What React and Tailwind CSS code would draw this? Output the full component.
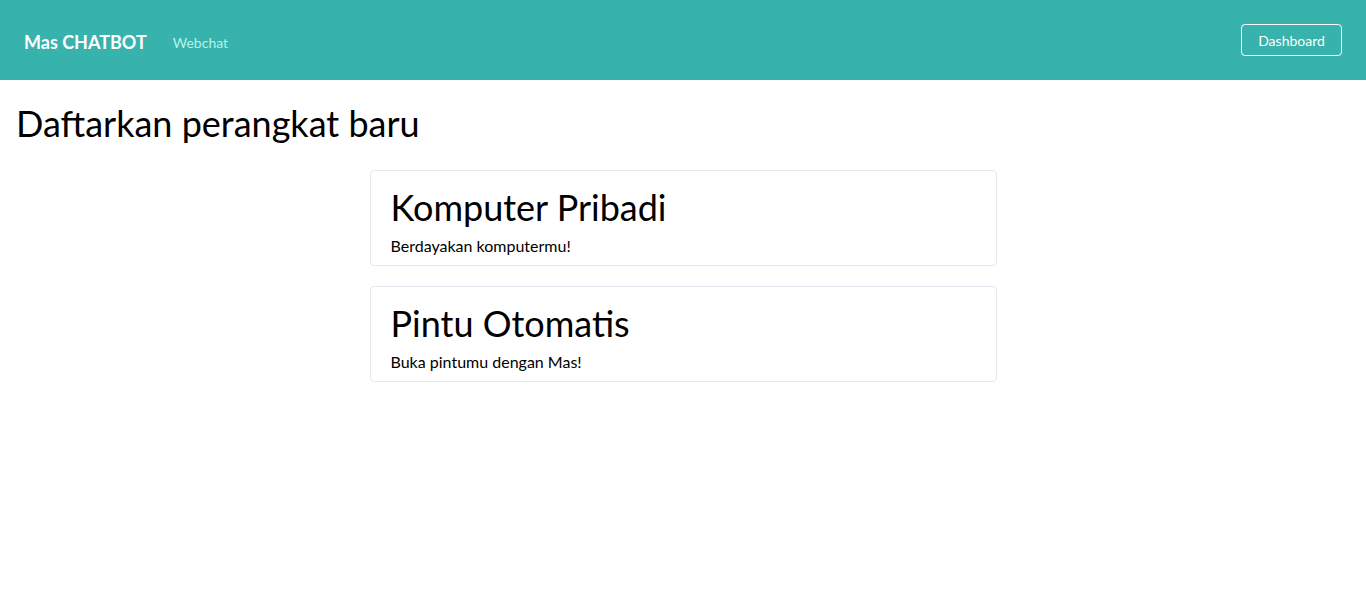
const font = { fontFamily: 'Lato, "Noto Sans", sans-serif' }

const devices = [
  { name: "Komputer Pribadi", desc: "Berdayakan komputermu!" },
  { name: "Pintu Otomatis", desc: "Buka pintumu dengan Mas!" },
]

export default function App() {
  return (
    <div className="min-h-screen bg-white text-black" style={font}>
      {/* Navbar */}
      <nav className="h-20 bg-[#38b2ac] flex items-center px-6">
        <a className="mt-1 text-[18px] font-bold text-white mr-[26px]">Mas CHATBOT</a>
        <a className="mt-1 text-[14px] text-[#b2f5ea]">Webchat</a>
        <div className="ml-auto">
          <button className="h-8 w-[101px] border border-white rounded text-[14px] text-white">
            Dashboard
          </button>
        </div>
      </nav>

      <main className="px-4 pt-[19px]">
        <h1 className="text-[36px] leading-[48px] mb-[23px]">Daftarkan perangkat baru</h1>
        <div className="w-[627px] mx-auto flex flex-col gap-5">
          {devices.map((d) => (
            <div key={d.name} className="border border-[#e2e8f0] rounded px-5 pt-3 pb-2">
              <h2 className="text-[36px] leading-[48px] mb-1">{d.name}</h2>
              <p className="text-[16px] leading-[22px]">{d.desc}</p>
            </div>
          ))}
        </div>
      </main>
    </div>
  )
}
